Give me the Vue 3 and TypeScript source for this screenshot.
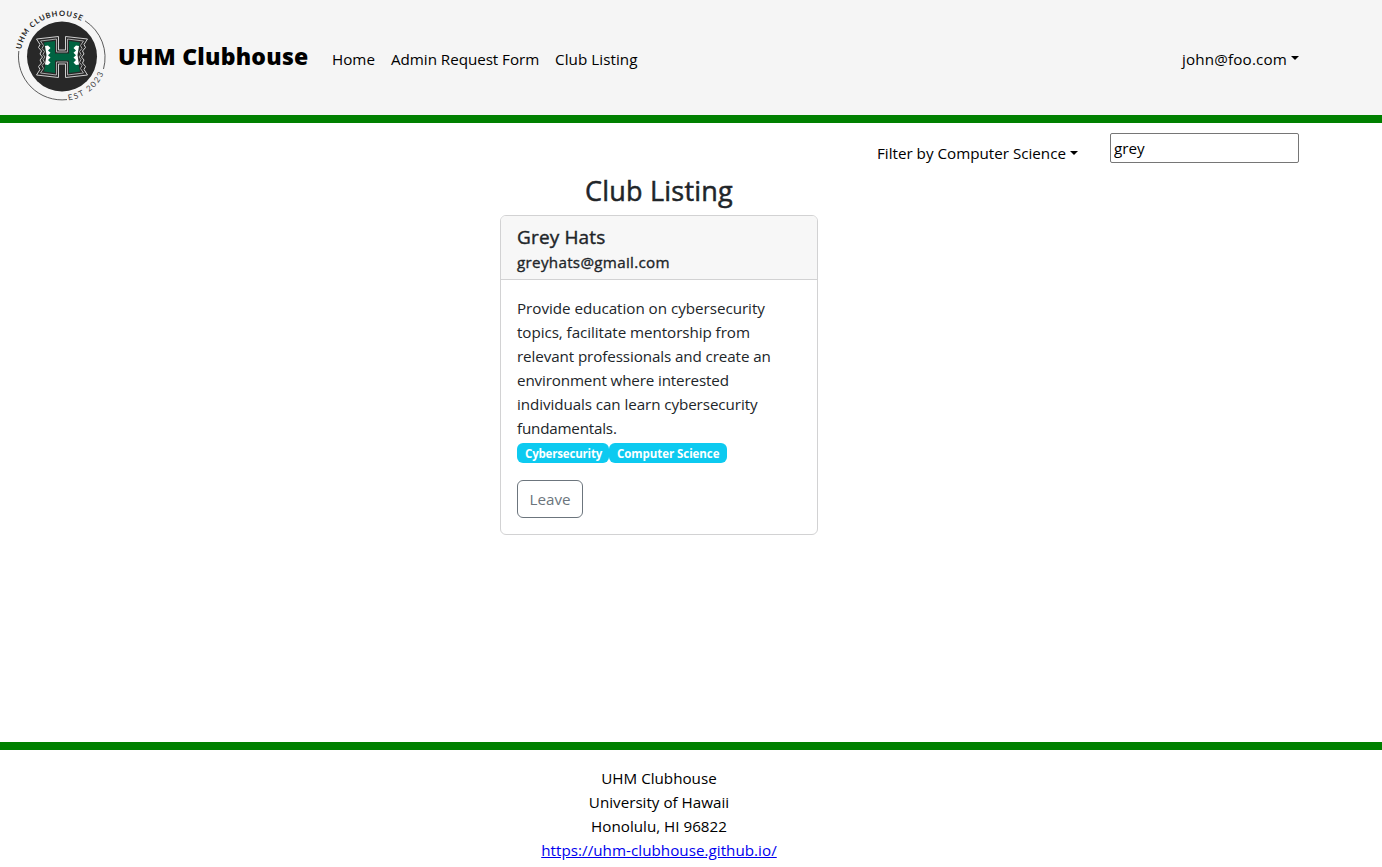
<script setup lang="ts">
interface Club {
  name: string
  email: string
  description: string[]
  interests: string[]
}

const links: string[] = ['Home', 'Admin Request Form', 'Club Listing']
const club: Club = {
  name: 'Grey Hats',
  email: 'greyhats@gmail.com',
  description: [
    'Provide education on cybersecurity',
    'topics, facilitate mentorship from',
    'relevant professionals and create an',
    'environment where interested',
    'individuals can learn cybersecurity',
    'fundamentals.',
  ],
  interests: ['Cybersecurity', 'Computer Science'],
}
const address: string[] = ['UHM Clubhouse', 'University of Hawaii', 'Honolulu, HI 96822']
</script>

<template>
  <div class="page">
    <header class="navbar">
      <svg class="logo" viewBox="0 0 100 100" width="100" height="100" aria-label="UHM Clubhouse logo">
        <defs>
          <path id="arc-top" d="M11.2 41.4 A41 41 0 0 1 81 20.5" />
          <path id="arc-bottom" d="M58.5 92.5 A45.5 45.5 0 0 0 97 53" />
        </defs>
        <path class="ring" d="M8.8 43 A43.5 43.5 0 0 0 57 91.6" />
        <path class="ring" d="M75 12.8 A43.5 43.5 0 0 1 93.5 61" />
        <circle cx="52" cy="48.5" r="35" fill="#282828" />
        <text class="ring-title"><textPath href="#arc-top" textLength="77">UHM CLUBHOUSE</textPath></text>
        <text class="ring-est"><textPath href="#arc-bottom" textLength="46">EST 2023</textPath></text>
        <g fill="none" stroke="#d0d0d0" stroke-width="1">
          <path d="M26.5 31 L48.5 28.5 V42 H55.5 V28.5 L77.5 31 L74 36.5 L75.5 39.5 L72.5 43 L74 46 L71.5 49 L74 52 L72.5 55 L75.5 58.5 L74 61.5 L77.5 67 L55.5 69.5 V56 H48.5 V69.5 L26.5 67 L30 61.5 L28.5 58.5 L31.5 55 L30 52 L32.5 49 L30 46 L31.5 43 L28.5 39.5 L30 36.5Z" />
          <path d="M30.5 33 L46.5 31 V44 H57.5 V31 L73.5 33 L70.5 37.5 L72 40.5 L69.5 43.5 L71 46.5 L69 49 L71 51.5 L69.5 54.5 L72 57.5 L70.5 60.5 L73.5 65 L57.5 67 V54 H46.5 V67 L30.5 65 L33.5 60.5 L32 57.5 L34.5 54.5 L33 51.5 L35 49 L33 46.5 L34.5 43.5 L32 40.5 L33.5 37.5Z" stroke="#a8a8a8" />
        </g>
        <path d="M34 34.5 L45 33 V45.5 H59 V33 L70 34.5 L67 49 L70 63.5 L59 65 V52.5 H45 V65 L34 63.5 L37 49Z" fill="#006341" />
        <path d="M35 38 l3 -0.5 2.5 2.5 -2.5 2.5 2.5 2.2 -2.5 2.5 2.5 2.3 -2.5 2.5 2.5 2.5 -2.5 2.5 -3 -0.5 1.5 -9.5Z M69 38 l-3 -0.5 -2.5 2.5 2.5 2.5 -2.5 2.2 2.5 2.5 -2.5 2.3 2.5 2.5 -2.5 2.5 2.5 2.5 3 -0.5 -1.5 -9.5Z" fill="#fff" />
      </svg>
      <a class="brand">UHM Clubhouse</a>
      <nav class="links">
        <a v-for="(link, i) in links" :key="link" :class="'link-' + i">{{ link }}</a>
      </nav>
      <a class="user"><span>john@foo.com</span><i class="caret" /></a>
    </header>

    <main class="main">
      <div class="toolbar">
        <a class="filter"><span>Filter by Computer Science</span><i class="caret" /></a>
        <input class="search" type="text" value="grey" />
      </div>
      <h2 class="title">Club Listing</h2>
      <article class="card">
        <div class="card-header">
          <h5 class="name">{{ club.name }}</h5>
          <h6 class="email">{{ club.email }}</h6>
        </div>
        <div class="card-body">
          <div class="description">
            <div v-for="(line, i) in club.description" :key="line" :class="'line-' + i">{{ line }}</div>
          </div>
          <div class="badges">
            <span v-for="(interest, i) in club.interests" :key="interest" :class="['badge', 'badge-' + i]">{{ interest }}</span>
          </div>
          <button class="leave" type="button">Leave</button>
        </div>
      </article>
    </main>

    <footer class="footer">
      <div v-for="line in address" :key="line">{{ line }}</div>
      <a class="site" href="#">https://uhm-clubhouse.github.io/</a>
    </footer>
  </div>
</template>

<style>
body {
  margin: 0;
  background: #fff;
}
</style>

<style scoped>
.page {
  box-sizing: border-box;
  display: flex;
  flex-direction: column;
  height: 867px;
  overflow: hidden;
  font-family: 'Open Sans', 'Noto Sans', sans-serif;
  font-size: 15.2px;
  line-height: 24px;
  color: #212529;
  white-space: nowrap;
}
.page * {
  box-sizing: border-box;
}
.navbar {
  display: flex;
  align-items: center;
  flex: none;
  height: 123px;
  padding: 0 83px 0 10px;
  border-bottom: 8px solid #008000;
  background: #f5f5f5;
  color: #000;
}
.logo {
  flex: none;
}
.ring {
  fill: none;
  stroke: #333;
  stroke-width: 0.8;
}
.ring-title {
  font: 700 7.5px Lato, sans-serif;
  fill: #222;
}
.ring-est {
  font: 400 8px Lato, sans-serif;
  fill: #444;
}
.brand {
  width: 190px;
  margin: 0 0 4px 8px;
  font-size: 23px;
  font-weight: 800;
  letter-spacing: 0.24px;
}
.links {
  display: flex;
  gap: 16px;
  margin: 2px 0 0 24px;
}
.link-0 {
  width: 43px;
}
.link-1 {
  width: 148px;
  letter-spacing: -0.04px;
}
.link-2 {
  letter-spacing: 0.06px;
}
.user,
.filter {
  display: flex;
  align-items: center;
}
.user {
  margin: 2px 0 0 auto;
  letter-spacing: 0.16px;
}
.caret {
  width: 0;
  height: 0;
  margin: 0 0 2px 4px;
  border: 4px solid transparent;
  border-top-color: #000;
  border-bottom: 0;
}
.main {
  display: flex;
  flex-direction: column;
  align-items: center;
  flex: none;
  width: 1318px;
  height: 619px;
}
.toolbar {
  display: flex;
  align-items: flex-start;
  align-self: flex-end;
  gap: 32px;
  height: 50px;
  padding: 10px 19px 0 0;
}
.filter {
  margin-top: 8px;
  color: #000;
}
.filter .caret {
  margin-bottom: 1px;
}
.search {
  width: 189px;
  height: 30px;
  padding: 1px 3px;
  border: 1px solid #767676;
  border-radius: 2px;
  font: inherit;
  color: #000;
}
.title {
  margin: 1px 0 7px;
  font-size: 27px;
  font-weight: 400;
  line-height: 34px;
  letter-spacing: 0.22px;
  -webkit-text-stroke: 0.5px #212529;
}
.card {
  width: 318px;
  height: 320px;
  border: 1px solid #d2d2d3;
  border-radius: 6px;
}
.card-header {
  height: 64px;
  padding: 9px 16px;
  border-bottom: 1px solid #d2d2d3;
  border-radius: 5px 5px 0 0;
  background: #f7f7f7;
}
.name,
.email {
  margin: 0;
  font-weight: 400;
}
.name {
  font-size: 19px;
  line-height: 25px;
  letter-spacing: 0.15px;
  -webkit-text-stroke: 0.4px #212529;
}
.email {
  font-size: 15.2px;
  line-height: 25px;
  letter-spacing: 0.3px;
  -webkit-text-stroke: 0.35px #212529;
}
.card-body {
  padding: 16px;
}
.line-0 {
  letter-spacing: -0.03px;
}
.line-1 {
  letter-spacing: -0.06px;
}
.line-2 {
  letter-spacing: -0.1px;
}
.line-3 {
  letter-spacing: -0.14px;
}
.line-4 {
  letter-spacing: -0.08px;
}
.line-5 {
  letter-spacing: -0.2px;
}
.badges {
  display: flex;
  margin: 3px 0 17px;
}
.badge {
  height: 20px;
  padding: 0 8px;
  border-radius: 6px;
  background: #0dcaf0;
  color: #fff;
  font-size: 11.5px;
  font-weight: 700;
  line-height: 21px;
}
.badge-0 {
  width: 92px;
  letter-spacing: -0.18px;
}
.badge-1 {
  width: 118px;
  letter-spacing: -0.06px;
}
.leave {
  width: 66px;
  height: 38px;
  padding: 0;
  border: 1px solid #6c757d;
  border-radius: 6px;
  background: transparent;
  color: #6c757d;
  font: inherit;
}
.footer {
  flex: none;
  width: 1382px;
  height: 125px;
  padding: 16px 64px 0 0;
  border-top: 8px solid #008000;
  text-align: center;
  color: #000;
}
.site {
  color: #0000ee;
  letter-spacing: 0.03px;
}
</style>
